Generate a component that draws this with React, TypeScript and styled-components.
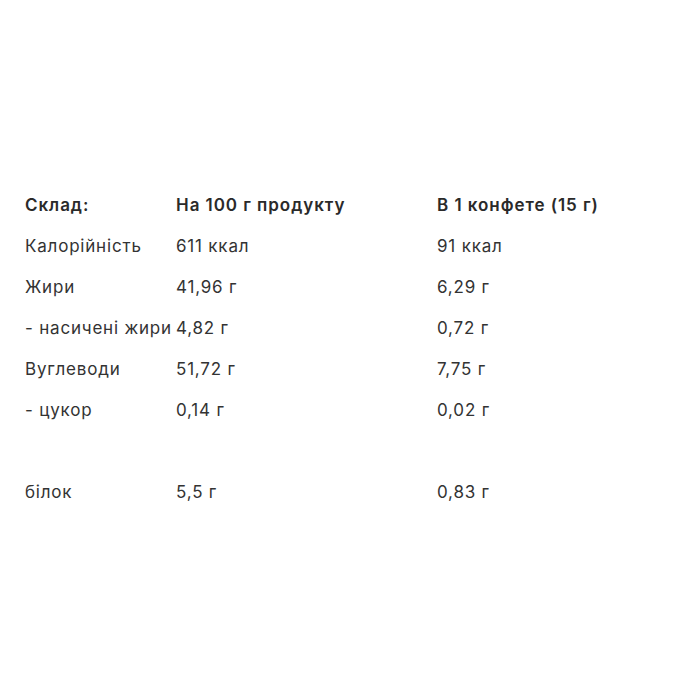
import React from 'react'
import styled, { createGlobalStyle } from 'styled-components'

const GlobalStyle = createGlobalStyle`
  html, body {
    margin: 0;
    padding: 0;
    background: #ffffff;
  }
  body {
    font-family: Inter, "Noto Sans", "Liberation Sans", sans-serif;
    color: #333333;
  }
`

const Page = styled.div`
  width: 700px;
  height: 700px;
  box-sizing: border-box;
  padding: 184px 0 0 25px;
`

const Table = styled.div`
  display: grid;
  grid-template-columns: 151px 261px auto;
  grid-auto-rows: 41px;
`

const Cell = styled.div<{ $head?: boolean }>`
  display: flex;
  align-items: center;
  font-size: 17px;
  font-weight: ${({ $head }) => ($head ? 600 : 400)};
  color: ${({ $head }) => ($head ? '#2a2a2a' : '#333333')};
  white-space: nowrap;
  letter-spacing: ${({ $head }) => ($head ? '0.95px' : '0.8px')};
`

const rows: [string, string, string][] = [
  ['Калорійність', '611 ккал', '91 ккал'],
  ['Жири', '41,96 г', '6,29 г'],
  ['- насичені жири', '4,82 г', '0,72 г'],
  ['Вуглеводи', '51,72 г', '7,75 г'],
  ['- цукор', '0,14 г', '0,02 г'],
  ['', '', ''],
  ['білок', '5,5 г', '0,83 г'],
]

export default function App() {
  return (
    <>
      <GlobalStyle />
      <Page>
        <Table>
          <Cell $head>Склад:</Cell>
          <Cell $head>На 100 г продукту</Cell>
          <Cell $head>В 1 конфете (15 г)</Cell>
          {rows.map((r, i) =>
            r.map((c, j) => <Cell key={`${i}-${j}`}>{c}</Cell>)
          )}
        </Table>
      </Page>
    </>
  )
}
